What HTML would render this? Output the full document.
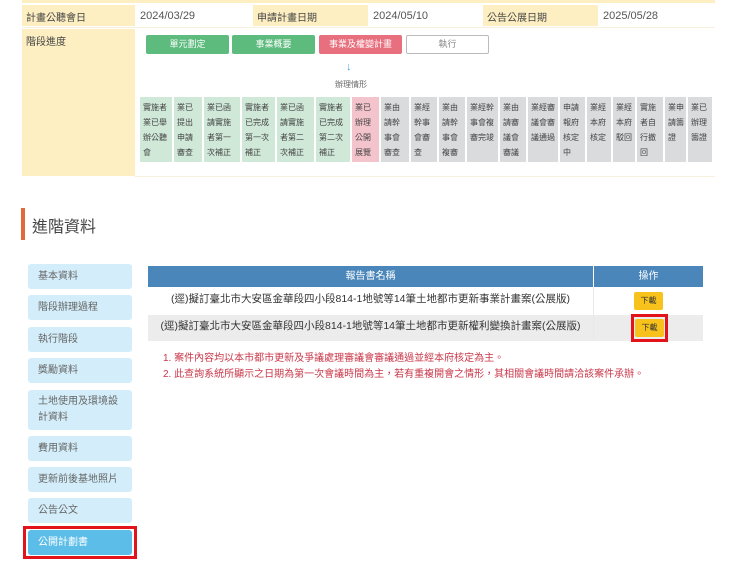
<!DOCTYPE html><html><head><meta charset="utf-8"><style>
body{margin:0;width:740px;height:573px;background:#fff;font-family:"Liberation Sans","Noto Sans CJK TC",sans-serif;position:relative;overflow:hidden;color:#333}
.a{position:absolute;box-sizing:border-box}
.y{background:#fdefc2}
.lab{font-size:10px;color:#444;padding:4px 4px}
.val{font-size:11px;color:#555;padding:5px 5px}
.btn{font-size:9px;color:#fff;text-align:center;line-height:19px;border-radius:2px}
.st{font-size:8px;line-height:15px;color:#444;padding:3px 0 0 3px;top:97px;height:65px;white-space:nowrap;overflow:hidden}
.g{background:#cfe8d8}.p{background:#f4c4cc}.k{background:#dadbdd}
.side{left:28px;width:104px;background:#d3eefa;border-radius:3px;font-size:10px;color:#666;padding:0 10px;line-height:25px}
</style></head><body>
<div class="a y" style="left:22px;top:0;width:693px;height:3px"></div>
<div class="a y lab" style="left:22px;top:5px;width:113px;height:21px">計畫公聽會日</div>
<div class="a val" style="left:135px;top:5px;width:118px;height:21px">2024/03/29</div>
<div class="a y lab" style="left:253px;top:5px;width:115px;height:21px">申請計畫日期</div>
<div class="a val" style="left:368px;top:5px;width:115px;height:21px">2024/05/10</div>
<div class="a y lab" style="left:483px;top:5px;width:115px;height:21px">公告公展日期</div>
<div class="a val" style="left:598px;top:5px;width:117px;height:21px">2025/05/28</div>
<div class="a" style="left:22px;top:27px;width:693px;height:1px;background:#f6f0dc"></div>
<div class="a y lab" style="left:22px;top:29px;width:113px;height:147px">階段進度</div>
<div class="a" style="left:135px;top:176px;width:580px;height:1px;background:#f6f0dc"></div>
<div class="a btn" style="left:146px;top:35px;width:83px;height:19px;background:#5dbb7e">單元劃定</div>
<div class="a btn" style="left:232px;top:35px;width:83px;height:19px;background:#5dbb7e">事業概要</div>
<div class="a btn" style="left:319px;top:35px;width:83px;height:19px;background:#e76f7e">事業及權變計畫</div>
<div class="a btn" style="left:406px;top:35px;width:83px;height:19px;background:#fff;border:1px solid #bbb;color:#888;line-height:17px">執行</div>
<div class="a" style="left:346px;top:61px;font-size:11px;color:#4aa3df">↓</div>
<div class="a" style="left:335px;top:79px;font-size:8px;color:#666">辦理情形</div>
<div class="a st g" style="left:140px;width:32px">實施者<br>業已舉<br>辦公聽<br>會</div>
<div class="a st g" style="left:174px;width:28px">業已<br>提出<br>申請<br>審查</div>
<div class="a st g" style="left:204px;width:36px">業已函<br>請實施<br>者第一<br>次補正</div>
<div class="a st g" style="left:242px;width:33px">實施者<br>已完成<br>第一次<br>補正</div>
<div class="a st g" style="left:277px;width:37px">業已函<br>請實施<br>者第二<br>次補正</div>
<div class="a st g" style="left:316px;width:34px">實施者<br>已完成<br>第二次<br>補正</div>
<div class="a st p" style="left:352px;width:27px">業已<br>辦理<br>公開<br>展覽</div>
<div class="a st k" style="left:381px;width:28px">業由<br>請幹<br>事會<br>審查</div>
<div class="a st k" style="left:411px;width:26px">業經<br>幹事<br>會審<br>查</div>
<div class="a st k" style="left:439px;width:26px">業由<br>請幹<br>事會<br>複審</div>
<div class="a st k" style="left:467px;width:31px">業經幹<br>事會複<br>審完竣</div>
<div class="a st k" style="left:500px;width:26px">業由<br>請審<br>議會<br>審議</div>
<div class="a st k" style="left:528px;width:30px">業經審<br>議會審<br>議通過</div>
<div class="a st k" style="left:560px;width:25px">申請<br>報府<br>核定<br>中</div>
<div class="a st k" style="left:587px;width:24px">業經<br>本府<br>核定</div>
<div class="a st k" style="left:613px;width:22px">業經<br>本府<br>駁回</div>
<div class="a st k" style="left:637px;width:26px">實施<br>者自<br>行撤<br>回</div>
<div class="a st k" style="left:665px;width:21px">業申<br>請籌<br>證</div>
<div class="a st k" style="left:688px;width:24px">業已<br>辦理<br>籌證</div>
<div class="a" style="left:21px;top:208px;width:4px;height:32px;background:#e06a3a"></div>
<div class="a" style="left:32px;top:213px;font-size:16px;color:#444">進階資料</div>
<div class="a side" style="top:264px;height:25px">基本資料</div>
<div class="a side" style="top:295px;height:25px">階段辦理過程</div>
<div class="a side" style="top:327px;height:25px">執行階段</div>
<div class="a side" style="top:358px;height:25px">獎勵資料</div>
<div class="a side" style="top:390px;height:40px;line-height:16px;padding-top:4px">土地使用及環境設計資料</div>
<div class="a side" style="top:436px;height:25px">費用資料</div>
<div class="a side" style="top:467px;height:25px">更新前後基地照片</div>
<div class="a side" style="top:498px;height:25px">公告公文</div>
<div class="a" style="left:23px;top:526px;width:114px;height:33px;border:3px solid #e3131b"></div>
<div class="a side" style="top:530px;height:25px;background:#5dbde9;color:#fff">公開計劃書</div>
<div class="a" style="left:148px;top:266px;width:445px;height:21px;background:#4a86b9;color:#fff;font-size:10px;text-align:center;line-height:21px">報告書名稱</div>
<div class="a" style="left:594px;top:266px;width:109px;height:21px;background:#4a86b9;color:#fff;font-size:10px;text-align:center;line-height:21px">操作</div>
<div class="a" style="left:148px;top:288px;width:555px;height:26px;background:#fff"></div>
<div class="a" style="left:148px;top:315px;width:555px;height:26px;background:#ececec"></div>
<div class="a" style="left:593px;top:287px;width:1px;height:54px;background:#e8e8e8"></div>
<div class="a" style="left:148px;top:288px;width:445px;font-size:10.5px;line-height:22px;text-align:center;color:#333">(逕)擬訂臺北市大安區金華段四小段814-1地號等14筆土地都市更新事業計畫案(公展版)</div>
<div class="a" style="left:148px;top:315px;width:445px;font-size:10.5px;line-height:22px;text-align:center;color:#333">(逕)擬訂臺北市大安區金華段四小段814-1地號等14筆土地都市更新權利變換計畫案(公展版)</div>
<div class="a" style="left:634px;top:292px;width:29px;height:18px;background:#f6c21b;border-radius:2px;font-size:8px;text-align:center;line-height:18px;color:#333">下載</div>
<div class="a" style="left:631px;top:314px;width:37px;height:28px;border:3px solid #e3131b"></div>
<div class="a" style="left:635px;top:319px;width:29px;height:18px;background:#f6c21b;border-radius:2px;font-size:8px;text-align:center;line-height:18px;color:#333">下載</div>
<div class="a" style="left:163px;top:351px;font-size:10px;color:#c9384a;line-height:16px">1. 案件內容均以本市都市更新及爭議處理審議會審議通過並經本府核定為主。<br>2. 此查詢系統所顯示之日期為第一次會議時間為主，若有重複開會之情形，其相關會議時間請洽該案件承辦。</div>
</body></html>
